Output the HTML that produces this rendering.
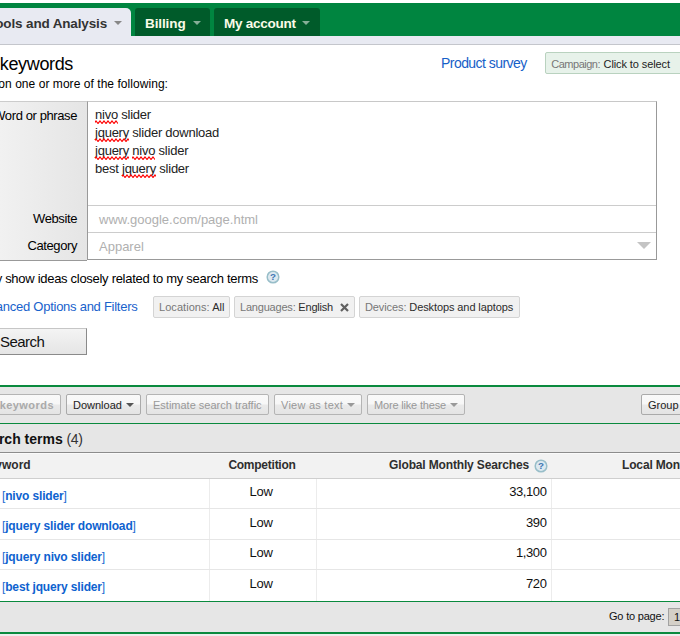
<!DOCTYPE html>
<html><head><meta charset="utf-8">
<style>
html,body{margin:0;padding:0;}
body{width:680px;height:636px;overflow:hidden;background:#fff;font-family:"Liberation Sans",Arial,sans-serif;font-size:13px;color:#000;position:relative;}
.abs{position:absolute;white-space:nowrap;}
#bar{left:0;top:3px;width:680px;height:33px;background:#008540;}
#sub{left:0;top:36px;width:680px;height:8px;background:#e8eaf2;border-bottom:1px solid #c4c6cc;}
.tab{top:8px;height:28px;background:#005b2a;border-radius:3px 3px 0 0;color:#fbfbe8;font-weight:bold;font-size:13.5px;line-height:31px;}
.tab i,.atab i{position:absolute;width:0;height:0;border-left:4px solid transparent;border-right:4px solid transparent;border-top:4px solid #86ae97;top:13px;}
.atab{top:8px;left:-40px;width:171px;height:29px;background:#e8eaf2;border-radius:5px 5px 0 0;color:#333;font-weight:bold;font-size:13.5px;line-height:31px;}
.atab i{border-top-color:#888;top:13px;}
.lbl{font-size:13px;right:603px;letter-spacing:-0.4px;}
.chip{top:296px;height:20px;border:1px solid #d4d4d4;background:#f1f1f1;border-radius:2px;font-size:11px;line-height:20px;color:#777;box-sizing:content-box;}
.chip b{font-weight:normal;color:#2c2c2c;}
.btn{top:394px;height:19px;border:1px solid #b4b4b4;background:linear-gradient(#f9f9f9 0%,#f7f7f7 45%,#e9e9e9 55%,#e4e4e4 100%);border-radius:2px;font-size:11px;line-height:20.5px;color:#999;}
.btn i{position:absolute;width:0;height:0;border-left:4px solid transparent;border-right:4px solid transparent;border-top:4px solid #999;top:8px;}
.hd{top:453px;height:25px;line-height:24px;font-weight:bold;font-size:12px;color:#2e2e2e;}
.kw{font-size:12px;color:#1a6ad2;left:2px;letter-spacing:-0.15px;margin-top:1px}
.kw b{color:#0e62cf;}
.low{font-size:13px;left:208px;width:106px;text-align:center;color:#111;letter-spacing:-0.3px}
.num{font-size:13px;left:400px;width:146.5px;text-align:right;color:#111;letter-spacing:-0.4px}
.vl{top:479px;height:122px;width:1px;background:#ececec;}
.hl{left:0;width:680px;height:1px;background:#e6e6e6;}
.sq{position:relative;display:inline-block;line-height:15px;vertical-align:baseline}
.sq svg{position:absolute;left:0;top:13px;width:100%;height:4px;overflow:hidden}
</style></head><body>
<svg width="0" height="0" style="position:absolute"><defs><pattern id="zz" width="4" height="4" patternUnits="userSpaceOnUse"><path d="M-1 3.5L1 1L3 3.5L5 1" stroke="#f00" stroke-width="1.1" fill="none"/></pattern></defs></svg>
<div class="abs" id="bar"></div>
<div class="abs" id="sub"></div>
<div class="abs atab"><span class="abs" style="right:24px;letter-spacing:-0.15px">Tools and Analysis</span><i style="left:154px"></i></div>
<div class="abs tab" style="left:135px;width:75px"><span class="abs" style="left:10px;letter-spacing:-0.1px">Billing</span><i style="left:58px"></i></div>
<div class="abs tab" style="left:214px;width:106px"><span class="abs" style="left:10px;letter-spacing:-0.25px">My account</span><i style="left:88px"></i></div>

<div class="abs" style="right:607px;top:52px;font-size:18px;line-height:24px;letter-spacing:-0.35px">Find keywords</div>
<div class="abs" style="right:512px;top:76px;font-size:12px;line-height:16px;letter-spacing:0.05px">Based on one or more of the following:</div>
<div class="abs" style="left:441px;top:55px;font-size:14px;line-height:16px;color:#1660c8;letter-spacing:-0.55px">Product survey</div>
<div class="abs" style="left:545px;top:52px;width:140px;height:20px;border:1px solid #b9d2bf;background:#e7f2ea;border-radius:2px;font-size:11px;line-height:22px;color:#777;"><span class="abs" style="left:5.3px;letter-spacing:-0.5px">Campaign: <span style="color:#222;letter-spacing:-0.1px;margin-left:1px">Click to select</span></span></div>

<!-- form box -->
<div class="abs" style="left:-20px;top:101px;width:107px;height:158px;background:linear-gradient(to right,#f1f1f1 20px,#e5e5e5);border-top:1px solid #ccc;border-bottom:1px solid #999;"></div>
<div class="abs" style="left:87px;top:101px;width:568px;height:157px;border:1px solid #999;border-top-color:#c8c8c8;background:#fff;"></div>
<div class="abs hl" style="left:88px;width:568px;top:205px;background:#ccc"></div>
<div class="abs hl" style="left:88px;width:568px;top:232px;background:#ccc"></div>
<div class="abs lbl" style="top:108px;line-height:16px;">Word or phrase</div>
<div class="abs lbl" style="top:211px;line-height:16px;">Website</div>
<div class="abs lbl" style="top:238px;line-height:16px;">Category</div>
<div class="abs" style="left:95px;top:106px;font-size:13px;line-height:18px;color:#222;white-space:pre;letter-spacing:-0.24px"><span class="sq">nivo<svg><rect width="100%" height="4" fill="url(#zz)"/></svg></span> slider
<span class="sq">jquery<svg><rect width="100%" height="4" fill="url(#zz)"/></svg></span> slider download
<span class="sq">jquery<svg><rect width="100%" height="4" fill="url(#zz)"/></svg></span> <span class="sq">nivo<svg><rect width="100%" height="4" fill="url(#zz)"/></svg></span> slider
best <span class="sq">jquery<svg><rect width="100%" height="4" fill="url(#zz)"/></svg></span> slider</div>
<div class="abs" style="left:99px;top:212px;font-size:13px;line-height:16px;color:#b0b0b0;">www.google.com/page.html</div>
<div class="abs" style="left:99px;top:239px;font-size:13px;line-height:16px;color:#b0b0b0;">Apparel</div>
<div class="abs" style="left:637px;top:242px;width:0;height:0;border-left:7px solid transparent;border-right:7px solid transparent;border-top:7px solid #c4c4c4;"></div>

<div class="abs" style="right:422px;top:271px;font-size:13px;line-height:16px;letter-spacing:-0.29px">Only show ideas closely related to my search terms</div>
<svg class="abs" style="left:266px;top:270px" width="14" height="14" viewBox="0 0 14 14"><circle cx="7" cy="7" r="5.8" fill="#dde9f0" stroke="#98bec9" stroke-width="1.5"/><text x="7" y="10.4" font-size="9.8" font-weight="bold" font-family="Liberation Sans" text-anchor="middle" fill="#3f78b4">?</text></svg>
<div class="abs" style="right:542.5px;top:299px;font-size:13px;line-height:16px;color:#1862cc;letter-spacing:-0.26px">Advanced Options and Filters</div>
<div class="abs chip" style="left:153px;width:75px"><span class="abs" style="left:5px;letter-spacing:0.05px">Locations: <b>All</b></span></div>
<div class="abs chip" style="left:234px;width:119px"><span class="abs" style="left:5px;letter-spacing:-0.2px">Languages: <b>English</b></span><svg class="abs" style="left:105px;top:6px" width="9" height="9" viewBox="0 0 9 9"><path d="M1 1L8 8M8 1L1 8" stroke="#606060" stroke-width="2.2" fill="none"/></svg></div>
<div class="abs chip" style="left:359px;width:159px"><span class="abs" style="left:5px;letter-spacing:-0.1px">Devices: <b>Desktops and laptops</b></span></div>

<div class="abs" style="left:-20px;top:328px;width:105px;height:25px;border:1px solid #8a8a8a;border-top-color:#c6c6c6;background:linear-gradient(#f4f4f4,#e5e5e5);"></div>
<div class="abs" style="left:0px;top:333px;font-size:15px;line-height:18px;color:#111;letter-spacing:-0.55px">Search</div>

<!-- toolbar -->
<div class="abs" style="left:0;top:385px;width:680px;height:2px;background:#0a8a3e;"></div>
<div class="abs" style="left:0;top:387px;width:680px;height:36px;background:#e6e6e6;"></div>
<div class="abs" style="left:0;top:423px;width:680px;height:1px;background:#0a8a3e;"></div>
<div class="abs" style="left:0;top:424px;width:680px;height:28px;background:#e6e6e6;"></div>
<div class="abs" style="left:0;top:452px;width:680px;height:1px;background:#8c8c8c;"></div>
<div class="abs" style="left:0;top:453px;width:680px;height:26px;background:#f2f2f2;border-top:1px solid #fafafa;border-bottom:1px solid #cfcfcf;box-sizing:border-box"></div>

<div class="abs btn" style="left:-40px;width:99px;font-weight:bold;color:#aaa"><span class="abs" style="right:6px;letter-spacing:0.45px">Add keywords</span></div>
<div class="abs btn" style="left:66px;width:73px;color:#222;border-color:#aaa"><span class="abs" style="left:6px">Download</span><i style="left:59px;border-top-color:#555"></i></div>
<div class="abs btn" style="left:146px;width:121px;"><span class="abs" style="left:6px">Estimate search traffic</span></div>
<div class="abs btn" style="left:274px;width:86px;"><span class="abs" style="left:6px;letter-spacing:0.25px">View as text</span><i style="left:72px"></i></div>
<div class="abs btn" style="left:367px;width:96px;"><span class="abs" style="left:6px;letter-spacing:-0.18px">More like these</span><i style="left:82px"></i></div>
<div class="abs btn" style="left:641px;width:60px;color:#222;border-color:#aaa"><span class="abs" style="left:6px">Group by</span></div>

<div class="abs" style="left:-26px;top:430px;font-size:14px;line-height:18px;color:#111;"><b>Search terms</b> <span style="color:#333;letter-spacing:-0.4px">(4)</span></div>

<div class="abs hd" style="left:-20px;">Keyword</div>
<div class="abs hd" style="left:210px;width:106px;text-align:center;left:209px;letter-spacing:-0.25px">Competition</div>
<div class="abs hd" style="right:151px;letter-spacing:-0.15px">Global Monthly Searches</div>
<svg class="abs" style="left:533.8px;top:458.5px" width="14" height="14" viewBox="0 0 14 14"><circle cx="7" cy="7" r="5.8" fill="#dde9f0" stroke="#98bec9" stroke-width="1.5"/><text x="7" y="10.4" font-size="9.8" font-weight="bold" font-family="Liberation Sans" text-anchor="middle" fill="#3f78b4">?</text></svg>
<div class="abs hd" style="left:622px;letter-spacing:-0.15px">Local Monthly Searches</div>

<div class="abs vl" style="left:209px"></div>
<div class="abs vl" style="left:316px"></div>
<div class="abs vl" style="left:551px"></div>
<div class="abs hl" style="top:508px"></div>
<div class="abs hl" style="top:539px"></div>
<div class="abs hl" style="top:569px"></div>

<div class="abs kw" style="top:488px">[<b>nivo slider</b>]</div>
<div class="abs kw" style="top:518px">[<b>jquery slider download</b>]</div>
<div class="abs kw" style="top:549px">[<b>jquery nivo slider</b>]</div>
<div class="abs kw" style="top:579px">[<b>best jquery slider</b>]</div>
<div class="abs low" style="top:484px">Low</div>
<div class="abs low" style="top:515px">Low</div>
<div class="abs low" style="top:545px">Low</div>
<div class="abs low" style="top:576px">Low</div>
<div class="abs num" style="top:484px">33,100</div>
<div class="abs num" style="top:515px">390</div>
<div class="abs num" style="top:545px">1,300</div>
<div class="abs num" style="top:576px">720</div>

<div class="abs" style="left:0;top:601px;width:680px;height:1px;background:#0a8a3e;"></div>
<div class="abs" style="left:0;top:602px;width:680px;height:30px;background:#e6e6e6;"></div>
<div class="abs" style="left:0;top:632px;width:680px;height:2px;background:#0a8a3e;"></div>
<div class="abs" style="left:0;top:634px;width:680px;height:2px;background:#ededed;"></div>
<div class="abs" style="left:609px;top:609px;font-size:11px;line-height:14px;color:#111;letter-spacing:-0.2px">Go to page:</div>
<div class="abs" style="left:668px;top:608px;width:30px;height:16px;border:1px solid #a2a2a2;background:#d4d0c8;font-size:11px;line-height:16px;color:#111;"><span class="abs" style="left:5px">1</span></div>
</body></html>
